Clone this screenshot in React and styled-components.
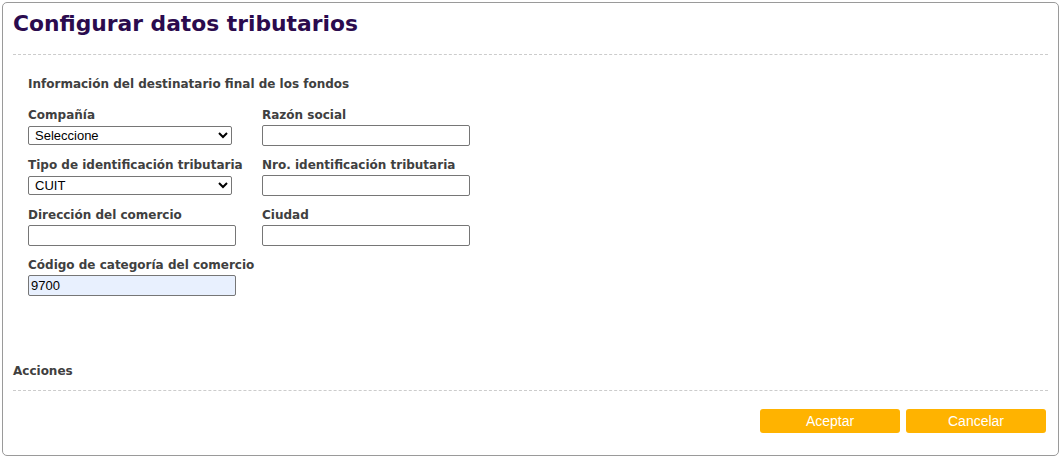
import React from 'react';
import styled, { createGlobalStyle } from 'styled-components';

const GlobalStyle = createGlobalStyle`
    body {
        margin: 0;
        background: #ffffff;
        font-family: 'DejaVu Sans', Verdana, sans-serif;
    }
`;

const leftFields = [
    { label: 'Compañía', type: 'select', value: 'Seleccione' },
    { label: 'Tipo de identificación tributaria', type: 'select', value: 'CUIT' },
    { label: 'Dirección del comercio', type: 'text', value: '' },
    { label: 'Código de categoría del comercio', type: 'text', value: '9700', filled: true },
];

const rightFields = [
    { label: 'Razón social', type: 'text', value: '' },
    { label: 'Nro. identificación tributaria', type: 'text', value: '' },
    { label: 'Ciudad', type: 'text', value: '' },
];

function renderField(field, idx) {
    return (
        <Field key={idx}>
            <Label>{field.label}</Label>
            {
                field.type === 'select' ? (
                    <Select defaultValue={field.value}>
                        <option>{field.value}</option>
                    </Select>
                ) : (
                    <TextInput defaultValue={field.value} $filled={field.filled} />
                )
            }
        </Field>
    );
}

const App = () => (
    <Page>
        <GlobalStyle />
        <Panel>
            <Title>Configurar datos tributarios</Title>
            <Divider $gap={17} />
            <FormSection>
                <SectionTitle>Información del destinatario final de los fondos</SectionTitle>
                <Columns>
                    <Column>{leftFields.map(renderField)}</Column>
                    <Column>{rightFields.map(renderField)}</Column>
                </Columns>
            </FormSection>
            <ActionsTitle>Acciones</ActionsTitle>
            <Divider $gap={11} />
            <ButtonRow>
                <Button>Aceptar</Button>
                <Button>Cancelar</Button>
            </ButtonRow>
        </Panel>
    </Page>
);

const Page = styled.div`
    padding: 2px;
    width: 1061px;
    box-sizing: border-box;
`;

const Panel = styled.div`
    box-sizing: border-box;
    width: 1057px;
    height: 454px;
    border: 1px solid #9a9a9a;
    border-radius: 5px;
    padding: 0 10px;
    display: flex;
    flex-direction: column;
`;

const Title = styled.h1`
    margin: 8px 0 0 0;
    font-size: 21.8px;
    line-height: 26px;
    font-weight: bold;
    color: #2b0b4e;
`;

const Divider = styled.div`
    height: 0;
    border-top: 1px dashed #cccccc;
    margin-top: ${({ $gap }) => $gap}px;
`;

const FormSection = styled.div`
    padding: 0 0 0 15px;
    height: 305px;
`;

const SectionTitle = styled.div`
    font-size: 12px;
    font-weight: bold;
    color: #404040;
    margin-top: 21px;
    line-height: 16px;
    white-space: nowrap;
`;

const Columns = styled.div`
    display: flex;
    margin-top: 15px;
`;

const Column = styled.div`
    display: flex;
    flex-direction: column;
    width: 234px;
`;

const Field = styled.div`
    height: 50px;
`;

const Label = styled.div`
    font-size: 12px;
    font-weight: bold;
    color: #404040;
    line-height: 16px;
    height: 18px;
    white-space: nowrap;
`;

const Select = styled.select`
    width: 204px;
    height: 19px;
    padding: 0 2px;
    font-family: 'Liberation Sans', Arial, sans-serif;
    font-size: 13px;
    color: #000000;
    border: 1px solid #767676;
    border-radius: 2px;
    background: #ffffff;
    margin: 0;
    box-sizing: border-box;
`;

const TextInput = styled.input`
    width: 208px;
    height: 21px;
    padding: 1px 2px;
    font-family: 'Liberation Sans', Arial, sans-serif;
    font-size: 13px;
    color: #000000;
    border: 1px solid #767676;
    border-radius: 2px;
    background: ${({ $filled }) => ($filled ? '#e8f0fe' : '#ffffff')};
    margin: 0;
    box-sizing: border-box;
`;

const ActionsTitle = styled.div`
    font-size: 12px;
    font-weight: bold;
    color: #404040;
    line-height: 16px;
    margin-top: 3px;
    height: 16px;
`;

const ButtonRow = styled.div`
    display: flex;
    justify-content: flex-end;
    gap: 6px;
    margin-top: 18px;
    padding-right: 2px;
`;

const Button = styled.button`
    width: 140px;
    height: 24px;
    border: none;
    border-radius: 3px;
    background: #ffb300;
    color: #ffffff;
    font-family: 'Liberation Sans', Arial, sans-serif;
    font-size: 14px;
    padding: 0;
    cursor: pointer;
`;

export default App;
